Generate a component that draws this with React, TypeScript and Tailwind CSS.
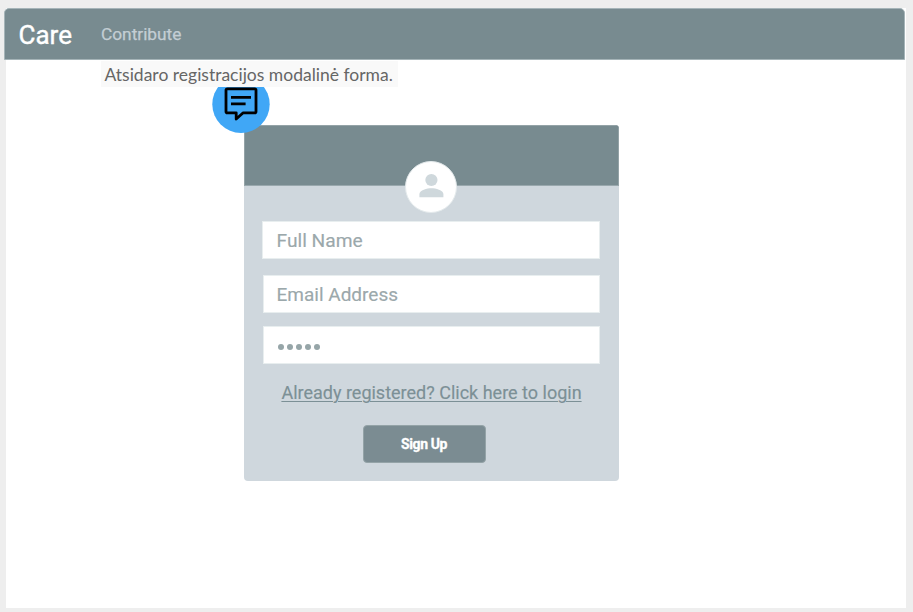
import React from "react";

function Field({ label, className }: { label: string; className: string }) {
  return (
    <input
      readOnly
      placeholder={label}
      className={`block h-[38px] border border-[#e8eeef] bg-white font-[Roboto,sans-serif] text-[#9ba8ab] outline-none [-webkit-text-stroke:0.15px] placeholder:text-[#9ba8ab] ${className}`}
    />
  );
}

function CommentBadge() {
  return (
    <svg className="absolute left-[206px] top-[67px] h-[58px] w-[58px]" viewBox="212 75 58 58">
      <circle cx="241" cy="104.3" r="28.7" fill="#40a7f6" />
      <path
        d="M227.6 88.8H254.6Q256 88.8 256 90.2V111.4Q256 112.8 254.6 112.8H243.2L236.2 119V112.8H227.4Q226 112.8 226 111.4V90.2Q226 88.8 227.6 88.8Z"
        fill="none"
        stroke="#000"
        strokeWidth="2.8"
        strokeLinejoin="round"
      />
      <path d="M231 97.3H251M231 103.8H245.6" stroke="#000" strokeWidth="2.8" />
    </svg>
  );
}

function SignUpCard() {
  return (
    <section className="ml-[238px] mt-[65px] h-[356px] w-[375px] overflow-hidden rounded-[4px] bg-[#cfd7dd]">
      <div className="flex h-[61px] justify-center border border-b-[#99a8ad] border-[#94a3a7] bg-[#788b90] pr-[1px] pt-[35px]">
        <div className="flex h-[52px] w-[52px] shrink-0 items-center justify-center rounded-full border border-[#e4eaec] bg-white">
          <svg viewBox="0 0 52 52" className="h-[52px] w-[52px] shrink-0" fill="#cfd8dc">
            <circle cx="26.4" cy="19" r="6.1" />
            <path d="M14.4 36.2V33C14.4 29 22.2 27.2 26.4 27.2S38.4 29 38.4 33V36.2Z" />
          </svg>
        </div>
      </div>
      <form className="flex flex-col">
        <Field label="Full Name" className="ml-[18px] mt-[35px] w-[338px] pl-[13.5px] text-[19.2px]" />
        <Field label="Email Address" className="ml-[19px] mt-4 w-[337px] pl-[12.5px] text-[19px]" />
        <div className="ml-[19px] mt-[13px] flex h-[38px] w-[337px] items-center gap-[3px] border border-[#e8eeef] bg-white pl-[13.5px] pt-[3px]">
          {[0, 1, 2, 3, 4].map((dot) => (
            <span key={dot} className="h-[6px] w-[6px] rounded-full bg-[#96a5a8]" />
          ))}
        </div>
        <a className="mt-[17px] self-center whitespace-nowrap text-[18px] leading-6 text-[#7c9096] underline decoration-1 underline-offset-2 [-webkit-text-stroke:0.15px]">
          Already registered? Click here to login
        </a>
        <button
          type="button"
          className="ml-[119px] mt-[20px] h-[38px] w-[123px] rounded-[4px] border border-[#94a3a7] bg-[#7b8c92] pr-[1px] text-[14px] font-bold tracking-[-0.4px] text-white [-webkit-text-stroke:0.3px]"
        >
          Sign Up
        </button>
      </form>
    </section>
  );
}

export default function App() {
  return (
    <div className="h-[612px] w-[913px] overflow-hidden bg-[#eeeeee] pl-[6px] pt-2 font-[Roboto,sans-serif]">
      <div className="relative h-[600px] w-[900px] bg-white">
        <header className="-ml-[2px] flex h-[52px] w-[901px] items-center rounded-t-[5px] border border-[#a5b4b8] bg-[#788b90]">
          <span className="ml-[13.5px] w-[82.5px] pt-[2px] text-[26px] leading-none text-white [-webkit-text-stroke:0.4px]">Care</span>
          <span className="pt-[1px] text-[17.3px] leading-none text-[#c3ced4] [-webkit-text-stroke:0.25px]">Contribute</span>
        </header>
        <SignUpCard />
        <CommentBadge />
        <div className="absolute left-[95px] top-[53px] h-[26px] w-[297px] whitespace-nowrap bg-[#f9f9f9] pl-[3.5px] font-[Lato,sans-serif] text-[17.5px] leading-[27px] text-[#666666]">
          Atsidaro registracijos modalinė forma.
        </div>
      </div>
    </div>
  );
}
